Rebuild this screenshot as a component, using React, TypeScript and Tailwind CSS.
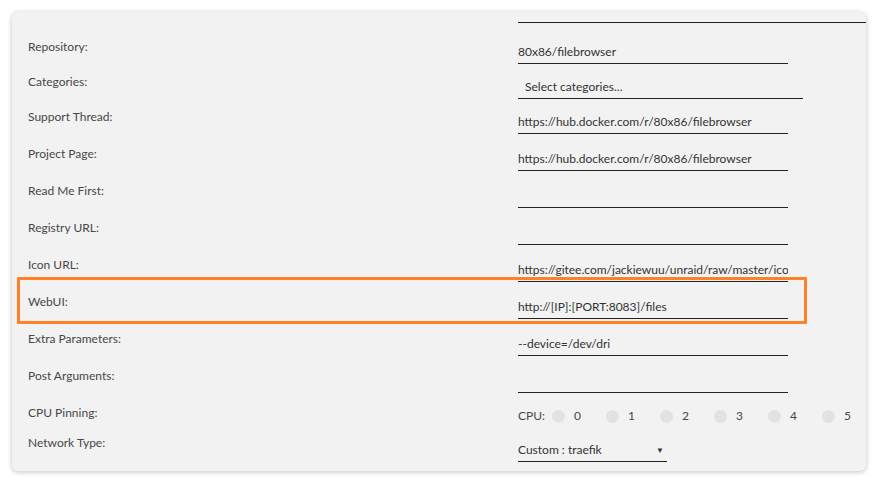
import React from "react";

type Row = {
  label: string;
  value: string;
  h: string;
  wide?: boolean;
};

const rows: Row[] = [
  { label: "Repository:", value: "80x86/filebrowser", h: "h-[41px]" },
  { label: "Categories:", value: "Select categories...", h: "h-[35px]", wide: true },
  { label: "Support Thread:", value: "https://hub.docker.com/r/80x86/filebrowser", h: "h-[35px]" },
  { label: "Project Page:", value: "https://hub.docker.com/r/80x86/filebrowser", h: "h-[37px]" },
  { label: "Read Me First:", value: "", h: "h-[37px]" },
  { label: "Registry URL:", value: "", h: "h-[37px]" },
  { label: "Icon URL:", value: "https://gitee.com/jackiewuu/unraid/raw/master/icons/filebrowser.png", h: "h-[37px]" },
  { label: "WebUI:", value: "http://[IP]:[PORT:8083]/files", h: "h-[37px]" },
  { label: "Extra Parameters:", value: "--device=/dev/dri", h: "h-[37px]" },
  { label: "Post Arguments:", value: "", h: "h-[37px]" },
];

const cpus = ["0", "1", "2", "3", "4", "5"];

export default function App() {
  return (
    <div
      className="relative w-[878px] h-[483px] bg-white overflow-hidden"
      style={{ fontFamily: "Lato, 'Liberation Sans', sans-serif" }}
    >
      <div className="absolute left-3 top-3 w-[854px] h-[459px] rounded-md bg-[#f2f2f2] shadow-[0_1px_5px_rgba(0,0,0,0.25)] overflow-hidden">
        <div className="pt-[10px]">
          {/* leftover underline of the field above */}
          <div className="ml-[506px] h-px bg-[#222]" />

          {rows.map((r) => (
            <div key={r.label} className={`flex items-end ${r.h}`}>
              <div className="w-[506px] shrink-0 pl-4 mb-[10px] text-[12px] leading-[15px] text-[#474747]">
                {r.label}
              </div>
              <div
                className={`h-6 border-b border-[#222] text-[12px] leading-6 text-[#333] whitespace-nowrap overflow-hidden ${
                  r.wide ? "w-[285px] pl-[7px]" : "w-[270px]"
                }`}
              >
                {r.value}
              </div>
            </div>
          ))}

          {/* CPU pinning */}
          <div className="flex items-start h-[37px] pt-[12px]">
            <div className="w-[506px] shrink-0 pl-4 text-[12px] leading-[15px] text-[#474747]">CPU Pinning:</div>
            <div className="flex items-center text-[12px] text-[#474747] mt-[2px]">
              <span className="w-[34px]">CPU:</span>
              {cpus.map((c) => (
                <div key={c} className="flex items-center w-[54px]">
                  <span className="w-[13px] h-[13px] rounded-full bg-[#e2e2e2]" />
                  <span className="ml-[9px]">{c}</span>
                </div>
              ))}
            </div>
          </div>

          {/* Network type */}
          <div className="flex items-end h-[32px]">
            <div className="w-[506px] shrink-0 pl-4 mb-[12px] text-[12px] leading-[15px] text-[#474747]">Network Type:</div>
            <div className="w-[149px] h-6 border-b border-[#222] flex items-center justify-between text-[12px] text-[#333]">
              <span>Custom : traefik</span>
              <span className="text-[8px] mr-[3px] text-[#333]">▼</span>
            </div>
          </div>
        </div>
      </div>

      {/* highlight around WebUI row */}
      <div className="absolute left-[17px] top-[277px] w-[790px] h-[47px] border-[3px] border-[#ff8127] rounded-[1px]" />
    </div>
  );
}
